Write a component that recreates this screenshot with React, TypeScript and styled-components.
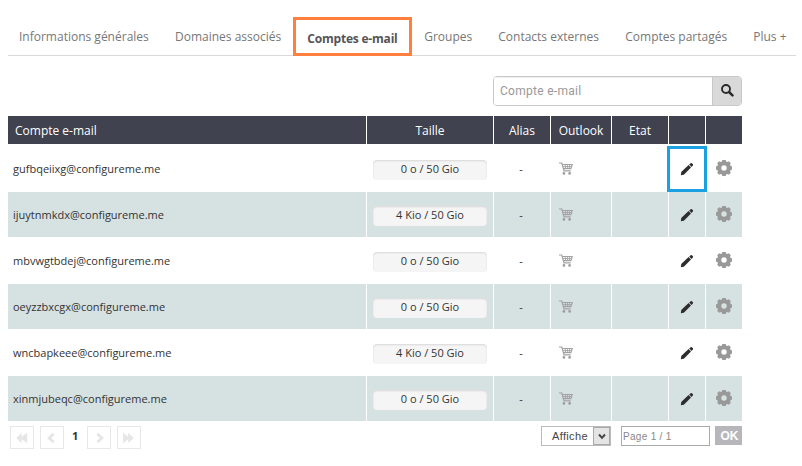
import React from "react";
import styled, { createGlobalStyle } from "styled-components";

const GlobalStyle = createGlobalStyle`
  * { box-sizing: border-box; }
  body {
    margin: 0;
    background: #fff;
    font-family: "Open Sans", "Noto Sans", sans-serif;
    font-size: 12px;
    color: #333;
  }
`;

const Page = styled.main`
  width: 802px;
  height: 466px;
  padding: 17px 6px 0 8px;
  overflow: hidden;
`;

const Tabs = styled.nav`
  display: flex;
  gap: 26px;
  height: 39px;
  padding-left: 11px;
  border-bottom: 1px solid #d9d9d9;
`;

const Tab = styled.a<{ $w: number }>`
  flex: 0 0 ${(p) => p.$w}px;
  line-height: 40px;
  white-space: nowrap;
  color: #777;
`;

const ActiveTab = styled(Tab)`
  height: 39px;
  margin: 0 -14px;
  border: 3px solid #ff7f3f;
  background: #fff;
  padding-left: 11px;
  line-height: 38px;
  font-weight: 700;
  letter-spacing: -0.2px;
  color: #555;
`;

const Content = styled.section`
  width: 734px;
`;

const Search = styled.div`
  display: flex;
  width: 249px;
  height: 30px;
  margin: 20px 0 10px auto;
  border: 1px solid #c8c8c8;
  border-radius: 4px;
  overflow: hidden;
`;

const SearchInput = styled.input`
  width: 218px;
  border: 0;
  padding: 0 6px;
  outline: 0;
  font: 12px Roboto, sans-serif;
  letter-spacing: 0.28px;
  box-shadow: inset 0 1px 1px #eee;
  &::placeholder { color: #999; }
`;

const SearchButton = styled.button`
  display: flex;
  width: 29px;
  padding: 7px 0 0 8px;
  border: 0;
  border-left: 1px solid #c8c8c8;
  background: #d9d9d9;
`;

const Row = styled.div<{ $shaded?: boolean }>`
  display: grid;
  grid-template-columns: 358px 126px 56px 60px 56px 36px 36px;
  column-gap: 1px;
  height: 45px;
  margin-bottom: 1px;
  --cell: ${(p) => (p.$shaded ? "#d6e1e2" : "#fff")};
`;

const HeaderRow = styled(Row)`
  height: 28px;
  margin-bottom: 2px;
  --cell: #40424f;
  color: #fff;
`;

const Cell = styled.div`
  display: flex;
  align-items: center;
  justify-content: center;
  background: var(--cell);
  white-space: nowrap;
  font-size: 11px;
`;

const HeadCell = styled(Cell)<{ $left?: boolean }>`
  justify-content: ${(p) => (p.$left ? "flex-start" : "center")};
  padding-left: ${(p) => (p.$left ? 7 : 0)}px;
  font-size: 12px;
`;

const MailCell = styled(Cell)`
  justify-content: flex-start;
  padding-left: 5px;
`;

const AliasCell = styled(Cell)`
  padding: 0 2px 1px 0;
`;

const CartCell = styled(Cell)`
  justify-content: flex-start;
  padding-left: 8px;
`;

const EditCell = styled(Cell)`
  padding-top: 1px;
`;

const HighlightedEditCell = styled(EditCell)`
  margin: 0 -2px -1px;
  border: 3px solid #1ba1e2;
  z-index: 1;
  padding: 0;
`;

const GearCell = styled(Cell)`
  padding: 0 1px 1px 0;
`;

const Quota = styled.span`
  width: 114px;
  height: 20px;
  margin-top: 3px;
  border-radius: 4px;
  background: #f5f5f5;
  box-shadow: inset 0 1px 2px rgba(0, 0, 0, 0.12);
  text-align: center;
  line-height: 18px;
`;

const Footer = styled.footer`
  display: flex;
  align-items: flex-start;
  padding: 4px 0 0 2px;
`;

const PageButton = styled.button`
  display: flex;
  align-items: center;
  justify-content: center;
  width: 24px;
  height: 23px;
  margin-right: 6px;
  padding: 1px 0 0;
  border: 1px solid #e8e8e8;
  background: #fff;
`;

const CurrentPage = styled.strong`
  width: 17px;
  padding-left: 2px;
  font-size: 11px;
  line-height: 20px;
`;

const Select = styled.div`
  display: flex;
  width: 70px;
  height: 20px;
  margin-left: auto;
  border: 1px solid #bbb;
  font: 11px "Liberation Sans", sans-serif;
  letter-spacing: 0.35px;
  color: #444;
  line-height: 18px;
`;

const SelectLabel = styled.span`
  flex: 1;
  padding-left: 10px;
  white-space: nowrap;
  overflow: hidden;
`;

const SelectArrow = styled.span`
  display: flex;
  align-items: center;
  justify-content: center;
  width: 17px;
  border: 1px solid #aaa;
  background: #e4e4e4;
`;

const PageInput = styled.input`
  width: 89px;
  height: 20px;
  margin-left: 10px;
  padding: 1px 1px 0;
  border: 1px solid #aaa;
  font: 10px "Liberation Sans", sans-serif;
  letter-spacing: 0.3px;
  color: #888;
`;

const OkButton = styled.button`
  width: 27px;
  height: 19px;
  margin-left: 5px;
  padding: 1px 0 0 2px;
  border: 0;
  background: #b7b7bb;
  color: #fff;
  font: bold 12px/18px "Liberation Sans", sans-serif;
`;

const SearchIcon = () => (
  <svg width="13" height="13" viewBox="0 0 13 13" fill="none" stroke="#2b2b2b">
    <circle cx="5" cy="5" r="4" strokeWidth="1.9" />
    <path d="M8 8l3.5 3.3" strokeWidth="2.5" strokeLinecap="round" />
  </svg>
);

const CartIcon = () => (
  <svg width="14" height="13" viewBox="0 0 14 13" fill="none" stroke="#a2a2a2">
    <path d="M0 1h2.8L5 8.8h6.7M3.3 2.5h9.9l-1.3 4.2H4.6" strokeWidth="1.2" />
    <path d="M3.8 4.6h8.7M6.2 2.5l.4 4M8.4 2.5v4M10.6 2.5l-.4 4" strokeWidth=".9" />
    <circle cx="4.9" cy="11.4" r="1.3" fill="#9b9b9b" stroke="none" />
    <circle cx="10.6" cy="11.4" r="1.3" fill="#9b9b9b" stroke="none" />
  </svg>
);

const PencilIcon = () => (
  <svg width="14" height="14" viewBox="0 0 14 14" fill="#2d2d2d">
    <path d="M.8 13.3l.5-3.2L2 9.3l6.6-6.2 2.4 2.4-6.4 6.6-.9.7zM9.2 2.6l1.5-1.4q.6-.5 1.2 0l1 1q.5.6 0 1.2l-1.4 1.5z" />
  </svg>
);

const GearIcon = () => (
  <svg width="16" height="16" viewBox="0 0 16 16" fill="#999">
    <path
      fillRule="evenodd"
      d="M6.4 0h3.2l.6 1.5 1 .4 1.6-.7 2 2-.7 1.6.4 1 1.5.6v3.2l-1.5.6-.4 1 .7 1.6-2 2-1.6-.7-1 .4-.6 1.5H6.4l-.6-1.5-1-.4-1.6.7-2-2 .7-1.6-.4-1L0 9.6V6.4l1.5-.6.4-1-.7-1.6 2-2 1.6.7 1-.4zM8 5.3a2.7 2.7 0 100 5.4 2.7 2.7 0 000-5.4z"
    />
  </svg>
);

const DoubleArrow = ({ right }: { right?: boolean }) => (
  <svg width="12" height="12" viewBox="0 0 12 12" fill="#e6e6e6">
    <path
      transform={right ? "translate(11 0) scale(-1 1)" : undefined}
      d="M.3 6L5.7.7v4L11.2.7v10.6L5.7 7.3v4z"
    />
  </svg>
);

const Chevron = ({ right }: { right?: boolean }) => (
  <svg width="12" height="12" viewBox="0 0 12 12" fill="none" stroke="#e6e6e6" strokeWidth="3">
    <path transform={right ? "translate(12 0) scale(-1 1)" : undefined} d="M7.6 1.7L3.2 6l4.4 4.3" />
  </svg>
);

const tabs = [
  { label: "Informations générales", w: 130 },
  { label: "Domaines associés", w: 106 },
  { label: "Comptes e-mail", w: 119, active: true },
  { label: "Groupes", w: 48 },
  { label: "Contacts externes", w: 101 },
  { label: "Comptes partagés", w: 102 },
  { label: "Plus +", w: 33 },
];

const headings = ["Taille", "Alias", "Outlook", "Etat", "", ""];

const accounts = [
  { mail: "gufbqeiixg@configureme.me", size: "0 o / 50 Gio" },
  { mail: "ijuytnmkdx@configureme.me", size: "4 Kio / 50 Gio" },
  { mail: "mbvwgtbdej@configureme.me", size: "0 o / 50 Gio" },
  { mail: "oeyzzbxcgx@configureme.me", size: "0 o / 50 Gio" },
  { mail: "wncbapkeee@configureme.me", size: "4 Kio / 50 Gio" },
  { mail: "xinmjubeqc@configureme.me", size: "0 o / 50 Gio" },
];

export default function App() {
  return (
    <>
      <GlobalStyle />
      <Page>
        <Tabs>
          {tabs.map((t) => {
            const Item = t.active ? ActiveTab : Tab;
            return <Item key={t.label} $w={t.w}>{t.label}</Item>;
          })}
        </Tabs>
        <Content>
          <Search>
            <SearchInput placeholder="Compte e-mail" />
            <SearchButton aria-label="Rechercher"><SearchIcon /></SearchButton>
          </Search>
          <HeaderRow>
            <HeadCell $left>Compte e-mail</HeadCell>
            {headings.map((h, i) => <HeadCell key={i}>{h}</HeadCell>)}
          </HeaderRow>
          {accounts.map((a, i) => {
            const Edit = i === 0 ? HighlightedEditCell : EditCell;
            return (
              <Row key={a.mail} $shaded={i % 2 === 1}>
                <MailCell>{a.mail}</MailCell>
                <Cell><Quota>{a.size}</Quota></Cell>
                <AliasCell>-</AliasCell>
                <CartCell><CartIcon /></CartCell>
                <Cell />
                <Edit><PencilIcon /></Edit>
                <GearCell><GearIcon /></GearCell>
              </Row>
            );
          })}
          <Footer>
            <PageButton><DoubleArrow /></PageButton>
            <PageButton><Chevron /></PageButton>
            <CurrentPage>1</CurrentPage>
            <PageButton><Chevron right /></PageButton>
            <PageButton><DoubleArrow right /></PageButton>
            <Select>
              <SelectLabel>Affiche</SelectLabel>
              <SelectArrow>
                <svg width="8" height="7" viewBox="0 0 8 7" fill="none" stroke="#444" strokeWidth="2"><path d="M1 1.5l3 3.3 3-3.3" /></svg>
              </SelectArrow>
            </Select>
            <PageInput defaultValue="Page 1 / 1" />
            <OkButton>OK</OkButton>
          </Footer>
        </Content>
      </Page>
    </>
  );
}
